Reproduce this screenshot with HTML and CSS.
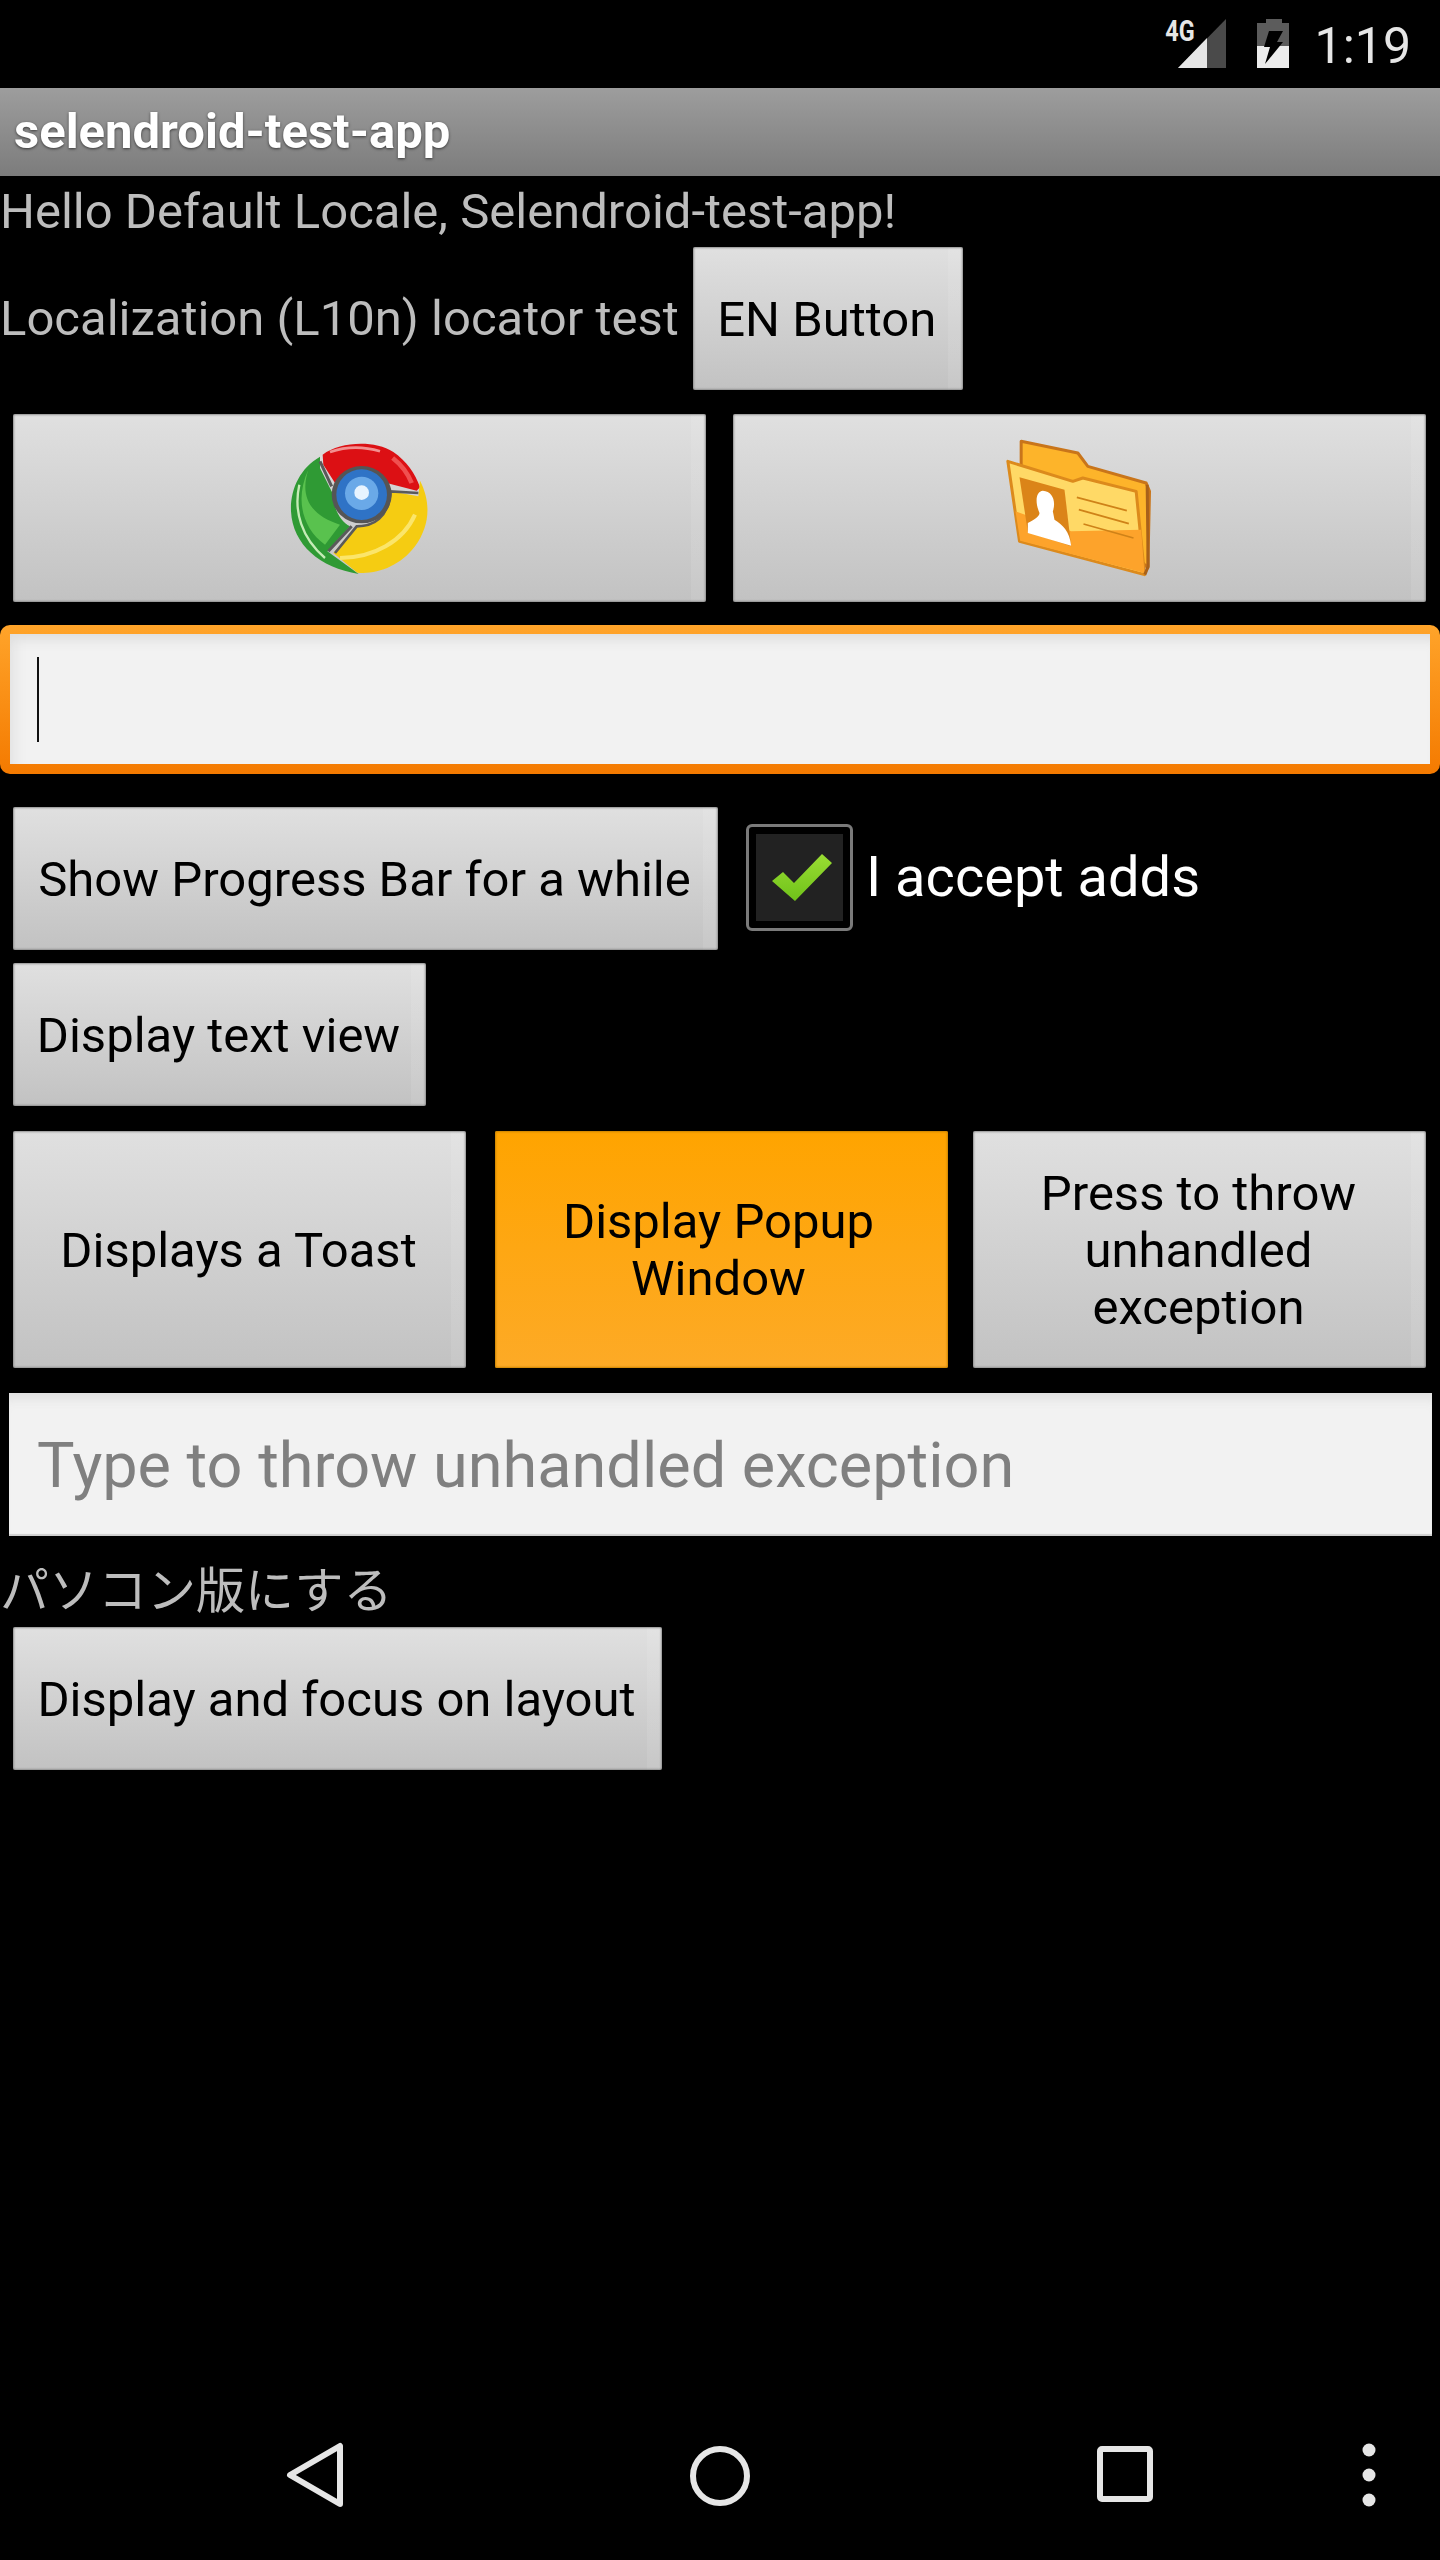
FILE: index.html
```html
<!DOCTYPE html>
<html lang="en">
<head>
<meta charset="utf-8">
<title>selendroid-test-app</title>
<link rel="stylesheet" href="styles.css">
</head>
<body>
<div class="screen">
  <header class="status">
    <div class="signal">
      <span class="net">4G</span>
      <svg class="signal-icon" width="50" height="50" viewBox="0 0 50 50"><polygon points="1,49 49,0 49,49" fill="#4a4a4a"/><polygon points="1,49 30,19 30,49" fill="#e6e6e6"/></svg>
    </div>
    <svg class="battery" width="32" height="49" viewBox="0 0 32 49"><path d="M9 0h16v4h7v45H0V4h9z" fill="#5c5c5c"/><path d="M0 27h32v22H0z" fill="#ececec"/><path d="M12 12h14l-6 11h6L8 45l5-17H7z" fill="#000"/></svg>
    <span class="clock">1:19</span>
  </header>
  <div class="titlebar">selendroid-test-app</div>
  <main class="content">
    <p class="label hello">Hello Default Locale, Selendroid-test-app!</p>
    <div class="l10n">
      <span class="label">Localization (L10n) locator test</span>
      <button class="btn btn-en">EN Button</button>
    </div>
    <div class="image-row">
      <button class="btn btn-image" aria-label="Chrome">
        <svg width="140" height="134" viewBox="150 90 420 400">
          <path d="M240 136 C180 170 150 235 153 300 C158 400 240 470 356 488 L262 420 L330 345 C300 330 280 290 280 250 L240 170Z" fill="#2f9a34"/>
          <path d="M205 175 C180 250 205 310 300 340 L255 400 C185 350 165 260 205 175Z" fill="#59c24e"/>
          <path d="M178 220 C160 300 185 380 255 440" fill="none" stroke="#c5ecb6" stroke-width="7"/>
          <path d="M248 130 C300 92 400 85 460 122 C500 150 525 185 540 228 L530 238 L440 215 C400 175 330 175 285 215 L250 160Z" fill="#dc1014"/>
          <path d="M270 122 C320 105 370 105 420 120" fill="none" stroke="#f29090" stroke-width="8"/>
          <path d="M458 140 C490 165 505 190 515 215" fill="none" stroke="#f05050" stroke-width="14"/>
          <path d="M540 208 C572 270 572 340 525 405 C480 465 410 490 352 484 L280 425 L350 345 C400 345 440 320 452 240 L535 255Z" fill="#f5cc12"/>
          <path d="M300 440 C400 440 490 390 525 310" fill="none" stroke="#fbe56a" stroke-width="12"/>
          <path d="M285 425 L350 345 C400 345 445 320 452 240 L535 245" fill="none" stroke="#5a5a5a" stroke-width="8"/>
          <path d="M240 150 L275 225 M335 345 L265 420" fill="none" stroke="#5a5a5a" stroke-width="9"/>
          <ellipse cx="365" cy="250" rx="90" ry="86" fill="#555"/>
          <circle cx="365" cy="250" r="76" fill="#2f73c6"/>
          <circle cx="365" cy="246" r="50" fill="#6aa9e8"/>
          <circle cx="365" cy="244" r="22" fill="#e8f4ff"/>
        </svg>
      </button>
      <button class="btn btn-image" aria-label="Contacts">
        <svg width="147" height="140" viewBox="140 80 440 420">
          <path d="M185 90 L355 125 L385 165 L560 215 L570 240 L565 470 L400 300 L185 180Z" fill="#fdb42a" stroke="#c9751a" stroke-width="9" stroke-linejoin="round"/>
          <path d="M145 150 L340 210 L370 200 L530 240 L555 490 L180 390Z" fill="#ffd966" stroke="#dc8a1c" stroke-width="9" stroke-linejoin="round"/>
          <path d="M168 300 L335 360 L545 355 L555 485 L182 388Z" fill="#fda32b"/>
          <path d="M180 198 L315 235 L335 405 L205 362Z" fill="#db8418"/>
          <path d="M250 238 C280 240 290 270 280 300 L285 325 C310 340 330 360 335 403 L205 365 L205 335 C225 325 240 315 240 305 C225 270 230 240 250 238Z" fill="#fff"/>
          <path d="M352 258 L502 298 M358 295 L508 337 M372 338 L522 380" stroke="#cf8218" stroke-width="5" fill="none"/>
          <path d="M563 220 L566 465 L556 490" stroke="#a8611a" stroke-width="9" fill="none" stroke-linejoin="round"/>
        </svg>
      </button>
    </div>
    <div class="edit-focus"><div class="edit-focus-inner"><span class="caret"></span></div></div>
    <div class="progress-row">
      <button class="btn btn-progress">Show Progress Bar for a while</button>
      <label class="check">
        <span class="check-box">
          <svg width="64" height="56" viewBox="0 0 64 56"><defs><linearGradient id="tick" x1="0" y1="0" x2="0" y2="1"><stop offset="0" stop-color="#9add33"/><stop offset="1" stop-color="#6fc21a"/></linearGradient></defs><path d="M2 32 L13 23 L24 34 L52 5 L62 14 L25 52Z" fill="url(#tick)"/></svg>
        </span>
        <span class="check-text">I accept adds</span>
      </label>
    </div>
    <button class="btn btn-text">Display text view</button>
    <div class="three">
      <button class="btn btn-tall">Displays a Toast</button>
      <button class="btn btn-tall btn-orange">Display Popup<br>Window</button>
      <button class="btn btn-tall">Press to throw<br>unhandled<br>exception</button>
    </div>
    <div class="edit-plain">Type to throw unhandled exception</div>
    <p class="label jp">パソコン版にする</p>
    <button class="btn btn-layout">Display and focus on layout</button>
  </main>
  <nav class="navbar">
    <svg class="nav-icon nav-back" width="58" height="66" viewBox="0 0 58 66"><path d="M54 4 V62 L4 33Z" fill="none" stroke="#e6e6e6" stroke-width="6" stroke-linejoin="round"/></svg>
    <svg class="nav-icon nav-home" width="62" height="62" viewBox="0 0 62 62"><circle cx="31" cy="31" r="27" fill="none" stroke="#e6e6e6" stroke-width="6"/></svg>
    <svg class="nav-icon nav-recent" width="56" height="56" viewBox="0 0 56 56"><rect x="3" y="3" width="50" height="50" rx="2" fill="none" stroke="#e6e6e6" stroke-width="6"/></svg>
    <svg class="nav-icon nav-menu" width="14" height="64" viewBox="0 0 14 64"><circle cx="7" cy="7" r="6.5" fill="#e6e6e6"/><circle cx="7" cy="32" r="6.5" fill="#e6e6e6"/><circle cx="7" cy="57" r="6.5" fill="#e6e6e6"/></svg>
  </nav>
</div>
</body>
</html>
```
FILE: styles.css
```css
* { box-sizing: border-box; }
html, body { margin: 0; background: #000; }
.screen {
  width: 1440px;
  height: 2560px;
  display: flex;
  flex-direction: column;
  background: #000;
  font-family: Roboto, "Noto Sans CJK JP", sans-serif;
  font-size: 49px;
}
.status {
  height: 88px;
  flex: none;
  display: flex;
  align-items: flex-start;
  padding: 19px 29px 0 0;
  justify-content: flex-end;
}
.signal { position: relative; width: 50px; height: 50px; margin-right: 30px; }
.signal-icon { display: block; }
.net {
  position: absolute;
  right: 32px;
  top: -1px;
  font-size: 30px;
  font-weight: 700;
  line-height: 26px;
  color: #e6e6e6;
  transform: scaleX(0.78);
  transform-origin: right center;
}
.battery { display: block; margin-right: 26px; }
.clock { color: #e6e6e6; font-size: 50px; line-height: 50px; margin-top: 2px; }
.titlebar {
  height: 88px;
  flex: none;
  background: linear-gradient(#9d9d9d, #7c7c7c);
  color: #fff;
  font-weight: 700;
  font-size: 49px;
  line-height: 88px;
  padding-left: 14px;
  text-shadow: 0 1px 3px rgba(0,0,0,.6);
}
.content { flex: 1; display: flex; flex-direction: column; align-items: flex-start; }
.label { color: #bdbdbd; margin: 0; }
.hello { line-height: 71px; height: 71px; }
.l10n { display: flex; align-items: center; height: 143px; }
.btn {
  font: inherit;
  color: #000;
  border: 0;
  padding: 1px 2px 0 0;
  display: flex;
  align-items: center;
  justify-content: center;
  text-align: center;
  line-height: 57px;
  border-radius: 2px;
  background:
    linear-gradient(to left, rgba(255,255,255,.09) 15px, transparent 15px),
    linear-gradient(#e0e0e0, #c2c2c2);
  box-shadow: inset 0 0 2px 1px #8f8f8f;
}
.btn-en { width: 270px; height: 143px; margin-left: 14px; }
.image-row { width: 100%; display: grid; grid-template-columns: 693px 693px; gap: 27px; padding: 0 13px; margin-top: 24px; }
.btn-image { height: 188px; padding: 0; }
.edit-focus {
  width: 100%;
  height: 149px;
  margin-top: 23px;
  padding: 9px 10px 10px 10px;
  border-radius: 10px;
  background: linear-gradient(#ffa42a, #f47a00);
}
.edit-focus-inner {
  height: 100%;
  display: flex;
  align-items: center;
  padding: 0 0 0 27px;
  background: #f2f2f2;
  box-shadow: inset 0 14px 12px -8px #dedede, inset 16px 0 12px -10px #e4e4e4;
}
.caret { width: 2px; height: 85px; background: #111; }
.progress-row { display: flex; align-items: center; margin: 33px 0 0 13px; }
.btn-progress { width: 705px; height: 143px; }
.check { display: flex; align-items: center; margin-left: 28px; }
.check-box {
  width: 107px;
  height: 107px;
  margin-top: -3px;
  padding-left: 5px;
  display: flex;
  align-items: center;
  justify-content: center;
  border: 3px solid #7a7a7a;
  border-radius: 6px;
  background: #222;
  box-shadow: inset 0 0 0 7px #000;
}
.check-text { color: #fff; font-size: 56px; line-height: 60px; margin: -4px 0 0 13px; }
.btn-text { width: 413px; height: 143px; margin: 13px 0 0 13px; }
.three { width: 100%; display: flex; padding: 0 13px; margin-top: 25px; }
.btn-tall { width: 453px; height: 237px; flex: none; }
.btn-orange {
  margin: 0 25px 0 29px;
  padding-right: 6px;
  background: linear-gradient(#ffa400, #fdaa26);
  box-shadow: inset 0 0 2px 1px #c98300;
}
.edit-plain {
  width: 1423px;
  height: 143px;
  margin: 25px 0 0 9px;
  padding-left: 28px;
  color: #808080;
  font-size: 63px;
  line-height: 145px;
  background: #f2f2f2;
  box-shadow: inset 0 14px 12px -8px #e0e0e0, inset 0 -2px 1px #d0d0d0;
}
.jp { line-height: 74px; height: 72px; margin-top: 19px; }
.btn-layout { width: 649px; height: 143px; margin-left: 13px; }
.navbar { height: 168px; flex: none; position: relative; }
.nav-icon { position: absolute; display: block; }
.nav-back { left: 286px; top: 50px; }
.nav-home { left: 689px; top: 53px; }
.nav-recent { left: 1097px; top: 54px; }
.nav-menu { left: 1362px; top: 51px; }
```
